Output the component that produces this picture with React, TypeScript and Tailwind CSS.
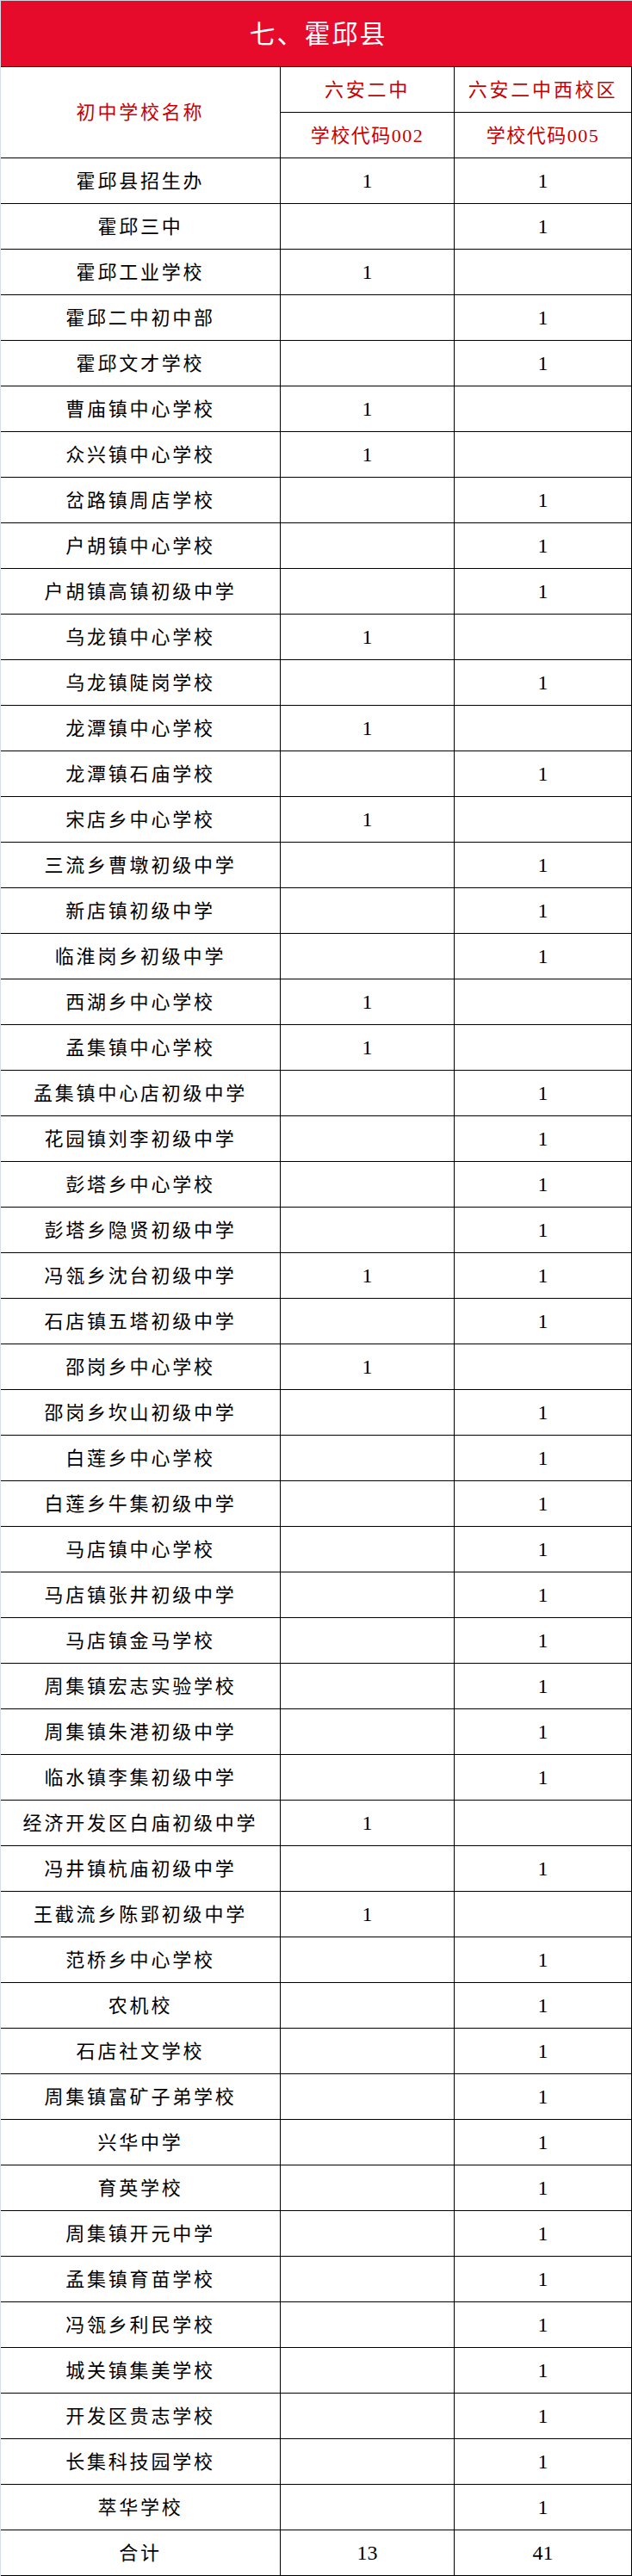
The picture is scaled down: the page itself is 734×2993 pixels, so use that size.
const rows: [string, string, string][] = [
  ['霍邱县招生办', '1', '1'],
  ['霍邱三中', '', '1'],
  ['霍邱工业学校', '1', ''],
  ['霍邱二中初中部', '', '1'],
  ['霍邱文才学校', '', '1'],
  ['曹庙镇中心学校', '1', ''],
  ['众兴镇中心学校', '1', ''],
  ['岔路镇周店学校', '', '1'],
  ['户胡镇中心学校', '', '1'],
  ['户胡镇高镇初级中学', '', '1'],
  ['乌龙镇中心学校', '1', ''],
  ['乌龙镇陡岗学校', '', '1'],
  ['龙潭镇中心学校', '1', ''],
  ['龙潭镇石庙学校', '', '1'],
  ['宋店乡中心学校', '1', ''],
  ['三流乡曹墩初级中学', '', '1'],
  ['新店镇初级中学', '', '1'],
  ['临淮岗乡初级中学', '', '1'],
  ['西湖乡中心学校', '1', ''],
  ['孟集镇中心学校', '1', ''],
  ['孟集镇中心店初级中学', '', '1'],
  ['花园镇刘李初级中学', '', '1'],
  ['彭塔乡中心学校', '', '1'],
  ['彭塔乡隐贤初级中学', '', '1'],
  ['冯瓴乡沈台初级中学', '1', '1'],
  ['石店镇五塔初级中学', '', '1'],
  ['邵岗乡中心学校', '1', ''],
  ['邵岗乡坎山初级中学', '', '1'],
  ['白莲乡中心学校', '', '1'],
  ['白莲乡牛集初级中学', '', '1'],
  ['马店镇中心学校', '', '1'],
  ['马店镇张井初级中学', '', '1'],
  ['马店镇金马学校', '', '1'],
  ['周集镇宏志实验学校', '', '1'],
  ['周集镇朱港初级中学', '', '1'],
  ['临水镇李集初级中学', '', '1'],
  ['经济开发区白庙初级中学', '1', ''],
  ['冯井镇杭庙初级中学', '', '1'],
  ['王截流乡陈郢初级中学', '1', ''],
  ['范桥乡中心学校', '', '1'],
  ['农机校', '', '1'],
  ['石店社文学校', '', '1'],
  ['周集镇富矿子弟学校', '', '1'],
  ['兴华中学', '', '1'],
  ['育英学校', '', '1'],
  ['周集镇开元中学', '', '1'],
  ['孟集镇育苗学校', '', '1'],
  ['冯瓴乡利民学校', '', '1'],
  ['城关镇集美学校', '', '1'],
  ['开发区贵志学校', '', '1'],
  ['长集科技园学校', '', '1'],
  ['萃华学校', '', '1'],
  ['合计', '13', '41'],
]

const font = { fontFamily: '"Liberation Serif", "Noto Sans CJK SC", serif' }

const cell = 'flex h-[53px] items-center justify-center border-b border-r border-black'
const name = 'text-[22px] tracking-[2.8px] text-black'
const num = 'text-[24px] text-black'

export default function App() {
  return (
    <div className="w-[734px] border-l border-t border-l-[#d5dde8] border-t-[#cfd4da] bg-white" style={font}>
      <div className="flex h-[76px] items-center justify-center bg-[#e60b2b]">
        <span className="pl-[4px] text-[30px] tracking-[2px] text-white">七、霍邱县</span>
      </div>
      <div className="grid grid-cols-[325px_202px_206px] border-t border-black">
        <div className={`${cell} row-span-2 h-[106px]`}>
          <span className="text-[22px] tracking-[2.8px] text-[#c80000]">初中学校名称</span>
        </div>
        <div className={cell}>
          <span className="text-[22px] tracking-[2.8px] text-[#c80000]">六安二中</span>
        </div>
        <div className={cell}>
          <span className="text-[22px] tracking-[2.8px] text-[#c80000]">六安二中西校区</span>
        </div>
        <div className={cell}>
          <span className="text-[22px] tracking-[1.5px] text-[#c80000]">学校代码002</span>
        </div>
        <div className={cell}>
          <span className="text-[22px] tracking-[1.5px] text-[#c80000]">学校代码005</span>
        </div>
        {rows.map(([school, a, b]) => (
          <div className="contents" key={school}>
            <div className={cell}>
              <span className={name}>{school}</span>
            </div>
            <div className={cell}>
              <span className={num}>{a}</span>
            </div>
            <div className={cell}>
              <span className={num}>{b}</span>
            </div>
          </div>
        ))}
      </div>
    </div>
  )
}
